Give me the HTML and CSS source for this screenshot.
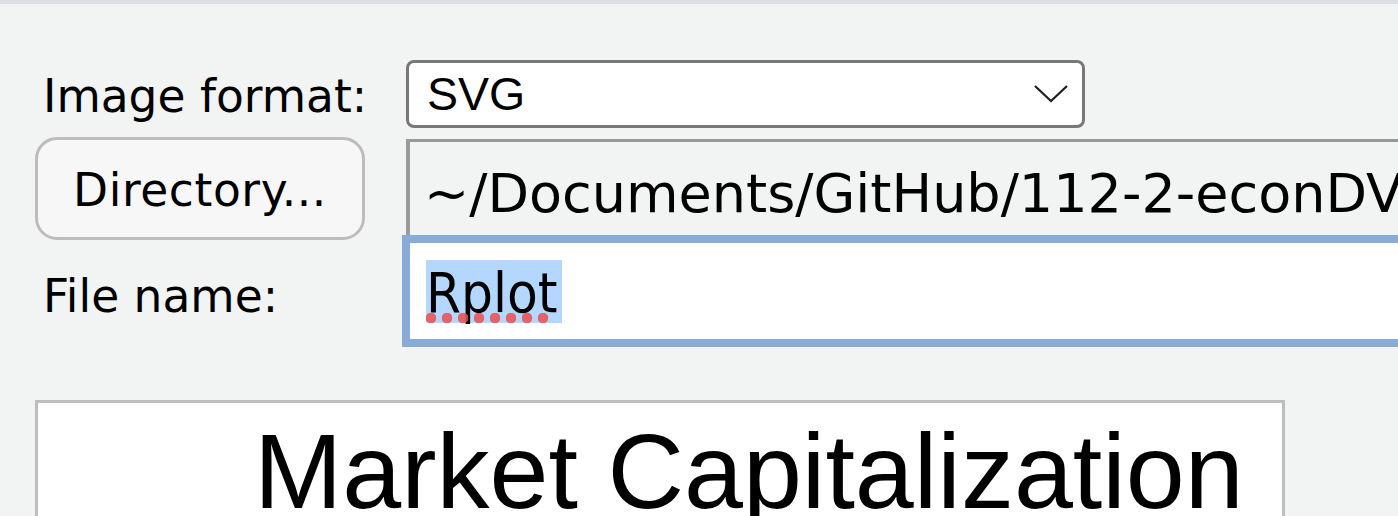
FILE: index.html
```html
<!DOCTYPE html>
<html lang="en">
<head>
<meta charset="utf-8">
<title>Save Plot as Image</title>
<link rel="stylesheet" href="styles.css">
</head>
<body>
<div class="topbar"></div>
<div class="dialog">
  <div class="row row-format">
    <label class="label">Image format:</label>
    <div class="select">
      <span class="select-value">SVG</span>
      <svg class="chevron" viewBox="0 0 34 18" width="34" height="18"><polyline points="1,1 17,16 33,1" fill="none" stroke="#1e1e1e" stroke-width="2.2"/></svg>
    </div>
  </div>
  <div class="row row-dir">
    <button class="dir-btn">Directory...</button>
    <div class="path-field"><span class="path-text">~/Documents/GitHub/112-2-econDV</span></div>
  </div>
  <div class="row row-file">
    <label class="label label-file">File name:</label>
    <div class="file-input"><span class="selection">Rplot<span class="squiggle"></span></span></div>
  </div>
  <div class="plot"><div class="plot-title">Market Capitalization</div></div>
</div>
</body>
</html>
```

FILE: styles.css
```css
html, body {
  margin: 0;
  height: 516px;
  overflow: hidden;
  background: #f2f4f3;
  color: #000;
}
.topbar {
  height: 4px;
  background: #dcdfe1;
}
.dialog {
  padding: 56px 0 0 35px;
}
.row {
  display: flex;
  align-items: flex-start;
}
.label {
  box-sizing: border-box;
  flex: none;
  padding-left: 8px;
  font: 45.5px/45.5px "DejaVu Sans", sans-serif;
  white-space: nowrap;
}
.row-format {
  height: 68px;
}
.row-format .label {
  width: 371px;
  margin-top: 14px;
}
.select {
  box-sizing: border-box;
  width: 679px;
  height: 68px;
  border: 3px solid #787878;
  border-radius: 8px;
  background: #fff;
  display: flex;
  align-items: center;
  justify-content: space-between;
  padding: 0 14px 0 18px;
}
.select-value {
  font: 46.5px/46.5px "Liberation Sans", Arial, sans-serif;
}
.chevron {
  display: block;
}
.row-dir {
  margin-top: 11px;
  height: 96px;
}
.dir-btn {
  flex: none;
  box-sizing: border-box;
  width: 330px;
  height: 103px;
  margin: -2px 0 0 0;
  padding: 4px 0 0 0;
  border: 3px solid #bcbcbc;
  border-radius: 22px;
  background: #f7f7f8;
  color: #000;
  font: 45.5px/45.5px "DejaVu Sans", sans-serif;
  letter-spacing: 0.6px;
}
.path-field {
  flex: 1;
  box-sizing: border-box;
  height: 96px;
  margin-left: 41px;
  border-top: 3px solid #9a9a9a;
  border-left: 4px solid #9a9a9a;
  padding: 25px 0 0 14px;
  white-space: nowrap;
  overflow: hidden;
  font: 54px/54px "DejaVu Sans", sans-serif;
}
.row-file {
  height: 112px;
}
.label-file {
  width: 367px;
  margin-top: 39px;
}
.file-input {
  flex: 1;
  box-sizing: border-box;
  height: 112px;
  border: 8px solid #8aaad8;
  border-right: none;
  background: #fff;
  padding: 17px 0 0 16px;
  overflow: hidden;
}
.selection {
  display: inline-block;
  position: relative;
  vertical-align: top;
  height: 63px;
  padding-right: 4px;
  background: #b3d7fe;
  font: 56px/66px "DejaVu Sans Condensed", "DejaVu Sans", sans-serif;
}
.squiggle {
  position: absolute;
  left: 0;
  bottom: 0;
  width: 128px;
  height: 10px;
  background: radial-gradient(circle at 5px 5px, rgba(236, 78, 78, 0.85) 5px, transparent 5.6px) 0 0 / 16px 10px repeat-x;
}
.plot {
  box-sizing: border-box;
  width: 1250px;
  height: 300px;
  margin-top: 53px;
  border: 3px solid #bdbdbd;
  background: #fff;
  padding: 15px 0 0 216px;
}
.plot-title {
  font: 106px/106px "Liberation Sans", Arial, sans-serif;
  white-space: nowrap;
}
```
